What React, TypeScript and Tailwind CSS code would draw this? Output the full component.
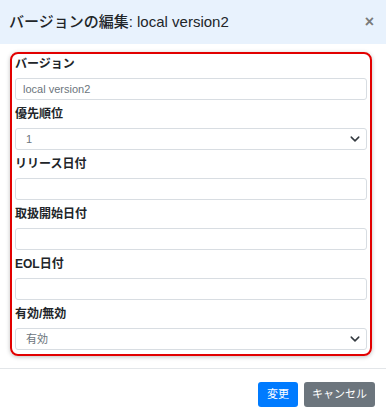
import React from "react";

const font = { fontFamily: '"Liberation Sans", "Noto Sans CJK JP", sans-serif' };

const Chevron = () => (
  <svg width="10" height="10" viewBox="0 0 16 16" className="text-[#343a40]">
    <path d="M2 5l6 6 6-6" fill="none" stroke="currentColor" strokeWidth="2.4" strokeLinecap="round" strokeLinejoin="round" />
  </svg>
);

const Field = ({ label, value, select, first }: { label: string; value?: string; select?: boolean; first?: boolean }) => (
  <div className={first ? "" : "mt-[4px]"}>
    <div className="h-[20px] leading-[20px] mb-[4px] text-[12px] font-bold text-[#212529]">{label}</div>
    <div
      className={`h-[22px] border border-[#d8dde2] rounded-[3px] bg-white flex items-center justify-between ${
        select ? "pl-[10px]" : "pl-[7px]"
      } pr-[6px] text-[11px] text-[#6c757d]`}
    >
      <span>{value}</span>
      {select && <Chevron />}
    </div>
  </div>
);

const App = () => {
  return (
    <div className="w-[386px] h-[417px] bg-white" style={font}>
      <div className="h-[44px] bg-[#e8f2fd] flex items-center justify-between pl-[9px] pr-[12px]">
        <span className="text-[15px] font-medium text-[#212529]">バージョンの編集: local version2</span>
        <span className="text-[16px] font-bold text-[#7a7a7a]">×</span>
      </div>
      <div className="pt-[8px] pl-[10px] pr-[14px] pb-[12px]">
        <div className="border-2 border-[#e20000] rounded-[8px] px-[3px] pb-[4px] shadow-[0_1px_4px_rgba(0,0,0,0.25)]">
          <Field first label="バージョン" value="local version2" />
          <Field label="優先順位" value="1" select />
          <Field label="リリース日付" />
          <Field label="取扱開始日付" />
          <Field label="EOL日付" />
          <Field label="有効/無効" value="有効" select />
        </div>
      </div>
      <div className="border-t border-[#e3e6e9] flex justify-end gap-[6px] pt-[13px] pr-[11px]">
        <button className="h-[25px] w-[40px] rounded-[3px] bg-[#007bff] text-white text-[11px]">変更</button>
        <button className="h-[25px] w-[71px] rounded-[3px] bg-[#6c757d] text-white text-[11px]">キャンセル</button>
      </div>
    </div>
  );
};

export default App;
